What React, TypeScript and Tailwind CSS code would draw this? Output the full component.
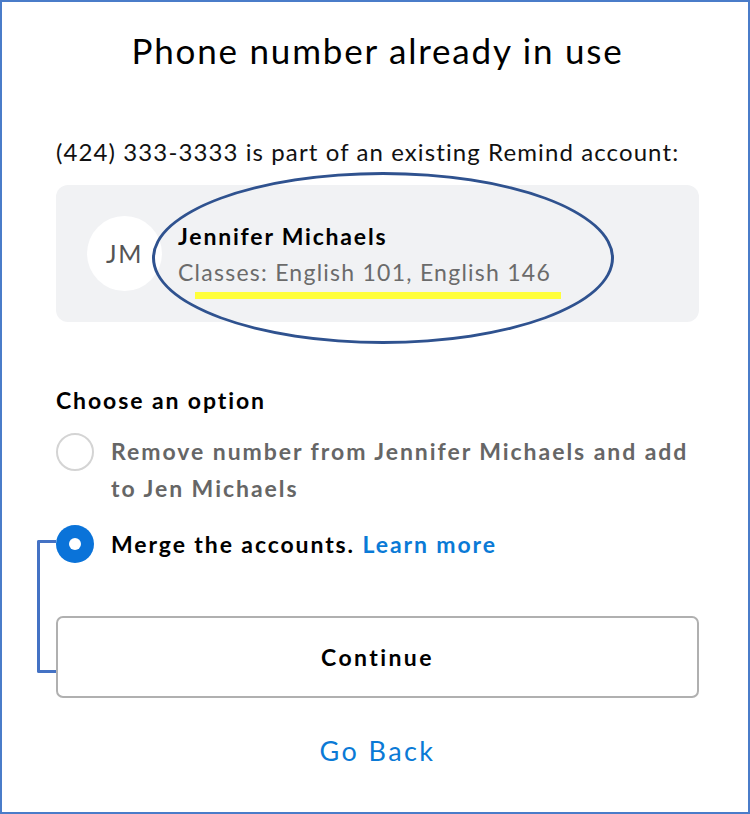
import React from "react";

const App: React.FC = () => {
  return (
    <div
      className="relative w-[750px] h-[814px] overflow-hidden border-2 border-[#4a7cc9] bg-white text-black"
      style={{ fontFamily: "Lato, 'Open Sans', sans-serif" }}
    >
      <div className="flex flex-col pl-[54px] pr-[49px] pt-[20px]">
        <h1 className="text-center text-[35px] leading-[56px] font-normal tracking-[1.8px]">
          Phone number already in use
        </h1>

        <p className="mt-[59px] text-[24px] leading-[30px] tracking-[1.1px] text-[#111]">
          (424) 333-3333 is part of an existing Remind account:
        </p>

        {/* account card */}
        <div className="mt-[18px] flex h-[137px] items-center gap-[16px] rounded-[12px] bg-[#f1f2f4] pl-[31px]">
          <div className="flex h-[75px] w-[75px] items-center justify-center rounded-full bg-white text-[25px] tracking-[1.5px] text-[#555]">
            JM
          </div>
          <div className="flex flex-col gap-[6px]">
            <div className="text-[23px] leading-[30px] font-bold tracking-[1.8px]">Jennifer Michaels</div>
            <div className="text-[23px] leading-[30px] tracking-[1.25px] text-[#6b6b6b]">
              Classes: English 101, English 146
            </div>
          </div>
        </div>

        <h2 className="mt-[63px] text-[23px] leading-[30px] font-bold tracking-[1.9px]">Choose an option</h2>

        <div className="mt-[18px] flex gap-[17px]">
          <div className="h-[38px] w-[38px] shrink-0 rounded-full border-2 border-[#d4d4d4]" />
          <div className="text-[23px] leading-[37px] font-bold tracking-[1.95px] text-[#666]">
            Remove number from Jennifer Michaels and add to Jen Michaels
          </div>
        </div>

        <div className="mt-[18px] flex items-center gap-[17px]">
          <div className="flex h-[38px] w-[38px] shrink-0 items-center justify-center rounded-full bg-[#0a73d9]">
            <div className="h-[12px] w-[12px] rounded-full bg-white" />
          </div>
          <div className="text-[23px] leading-[37px] font-bold tracking-[1.9px]">
            Merge the accounts. <span className="text-[#0a7ad6]">Learn more</span>
          </div>
        </div>

        <button className="mt-[53px] h-[82px] w-full rounded-[7px] border-2 border-[#b0b0b0] bg-white text-[23px] font-bold tracking-[2.4px]">
          Continue
        </button>

        <div className="mt-[35px] text-center text-[27px] leading-[36px] tracking-[2.4px] text-[#0a7ad6]">
          Go Back
        </div>
      </div>

      {/* annotations */}
      <div className="absolute left-[150px] top-[170px] h-[172px] w-[462px] rounded-[50%] border-[3.5px] border-[#2f528f]" />
      <div className="absolute left-[193px] top-[290px] h-[7px] w-[366px] bg-[#ffff3b]" />
      <div className="absolute left-[35px] top-[538px] h-[133px] w-[19px] rounded-l-[2px] border-y-[3px] border-l-[3px] border-[#4472c4]" />
    </div>
  );
};

export default App;
